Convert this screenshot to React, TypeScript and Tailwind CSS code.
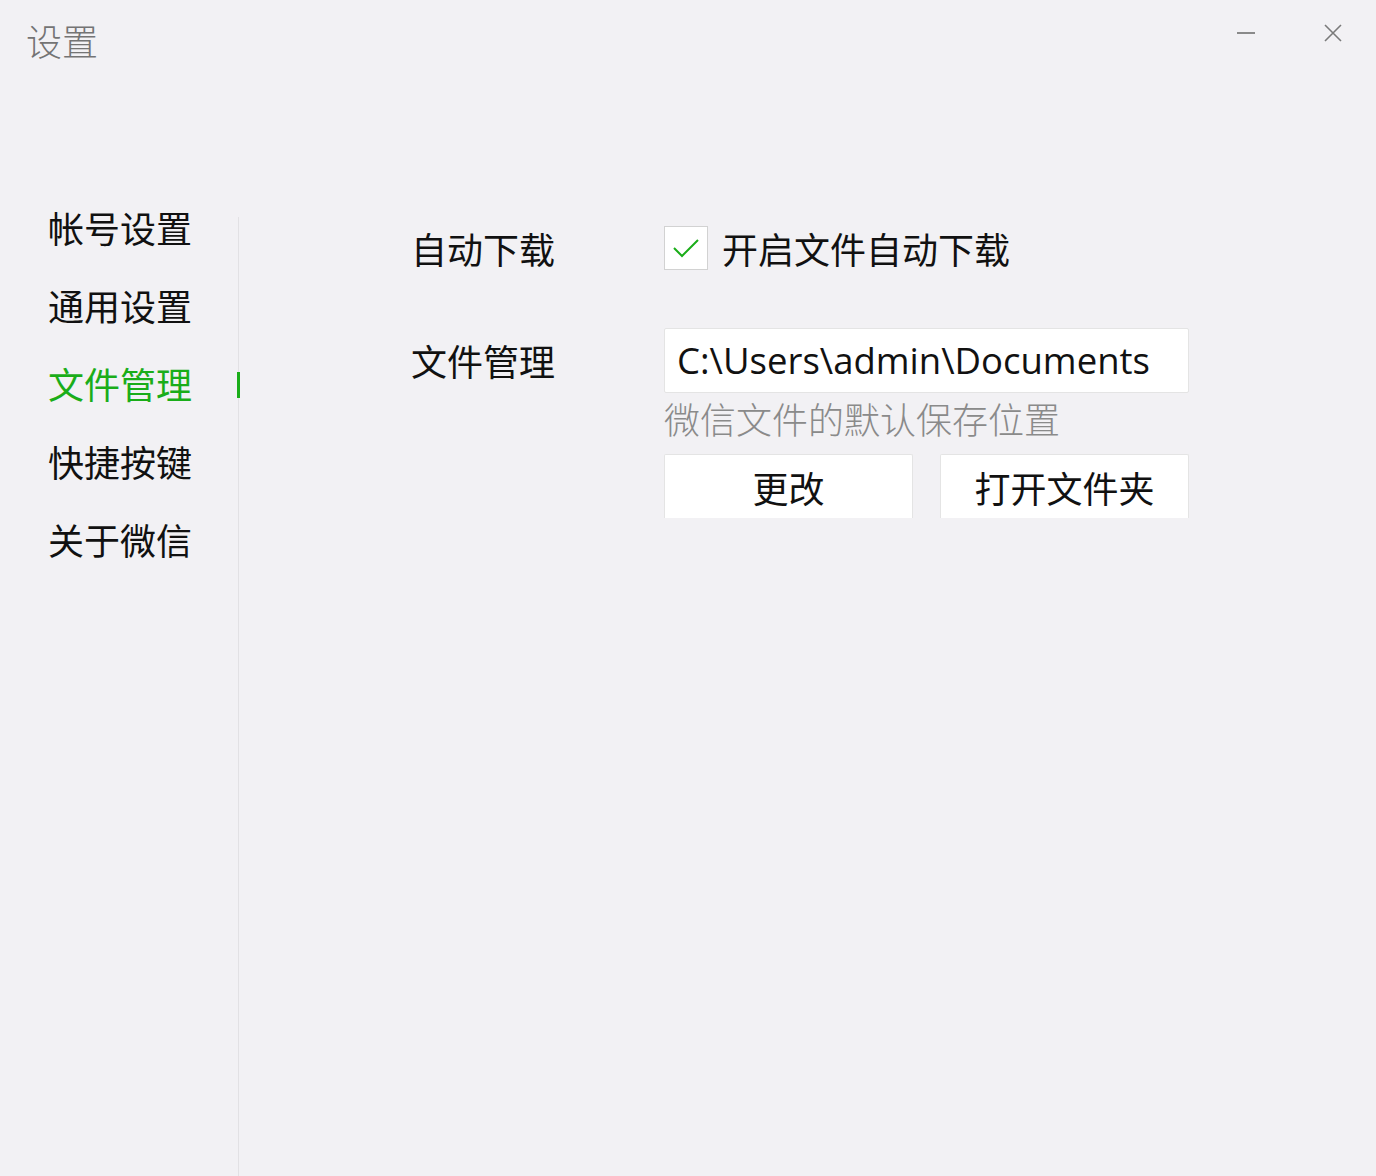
import React, { useState } from 'react';

const navItems = ['帐号设置', '通用设置', '文件管理', '快捷按键', '关于微信'];

const cjk = "font-['Microsoft_YaHei','Noto_Sans_CJK_SC',sans-serif]";

export default function App() {
  const [active, setActive] = useState('文件管理');
  const [autoDownload, setAutoDownload] = useState(true);

  return (
    <div className={`w-[1376px] h-[1176px] bg-[#f2f1f4] text-[#111] flex flex-col overflow-hidden ${cjk}`}>
      {/* Title bar */}
      <div className="h-[188px] flex items-start justify-between">
        <div className="pl-[26px] pt-[16px] text-[36px] leading-[48px] text-[#747474] font-light">设置</div>
        <div className="flex items-center pt-[22px] pr-[34px] gap-[68px]">
          <svg width="20" height="22" viewBox="0 0 20 22">
            <line x1="1" y1="11" x2="19" y2="11" stroke="#8a8a8a" strokeWidth="2" />
          </svg>
          <svg width="18" height="18" viewBox="0 0 18 18">
            <path d="M1 1 L17 17 M17 1 L1 17" stroke="#7a7a7a" strokeWidth="1.6" fill="none" />
          </svg>
        </div>
      </div>

      {/* Body */}
      <div className="flex-1 flex">
        {/* Sidebar */}
        <nav className="w-[238px] flex flex-col">
          {navItems.map((item) => (
            <button
              key={item}
              onClick={() => setActive(item)}
              className={`relative h-[78px] text-left pl-[48px] text-[36px] leading-[78px] ${
                active === item ? 'text-[#1aad19]' : 'text-[#111]'
              }`}
            >
              {item}
              {active === item && (
                <span className="absolute right-[-2px] top-[41px] -translate-y-1/2 w-[3px] h-[26px] bg-[#1aad19]" />
              )}
            </button>
          ))}
        </nav>
        <div className="mt-[29px] w-px bg-[#e2e1e4]" />

        {/* Content */}
        <div className="pl-[174px] pt-[38px] flex flex-col">
          <div className="flex items-center h-[44px]">
            <div className="w-[251px] text-[36px] -ml-[2px]">自动下载</div>
            <button
              onClick={() => setAutoDownload(!autoDownload)}
              className="ml-[2px] w-[44px] h-[44px] bg-white border border-[#d2d2d2] flex items-center justify-center"
            >
              {autoDownload && (
                <svg width="30" height="22" viewBox="0 0 30 22">
                  <path d="M3 11 L11 19 L27 3" stroke="#1aad19" strokeWidth="2" fill="none" />
                </svg>
              )}
            </button>
            <span className="ml-[14px] text-[36px]">开启文件自动下载</span>
          </div>

          <div className="flex items-start mt-[58px]">
            <div className="w-[251px] h-[65px] leading-[65px] text-[36px] -ml-[2px]">文件管理</div>
            <div className="flex flex-col w-[525px] ml-[2px]">
              <div className="h-[65px] bg-white border border-[#e4e4e4] rounded-[2px] pl-[12px] flex items-center text-[36.5px] font-['Segoe_UI','Open_Sans','Noto_Sans',sans-serif]">
                C:\Users\admin\Documents
              </div>
              <div className="h-[51px] leading-[51px] text-[36px] text-[#8a8a8a] font-light">微信文件的默认保存位置</div>
              <div className="flex justify-between mt-[10px]">
                <button className="w-[249px] h-[64px] bg-white border border-b-0 border-[#e4e4e4] rounded-t-[2px] text-[36px] leading-[60px]">
                  更改
                </button>
                <button className="w-[249px] h-[64px] bg-white border border-b-0 border-[#e4e4e4] rounded-t-[2px] text-[36px] leading-[60px]">
                  打开文件夹
                </button>
              </div>
            </div>
          </div>
        </div>
      </div>
    </div>
  );
}
